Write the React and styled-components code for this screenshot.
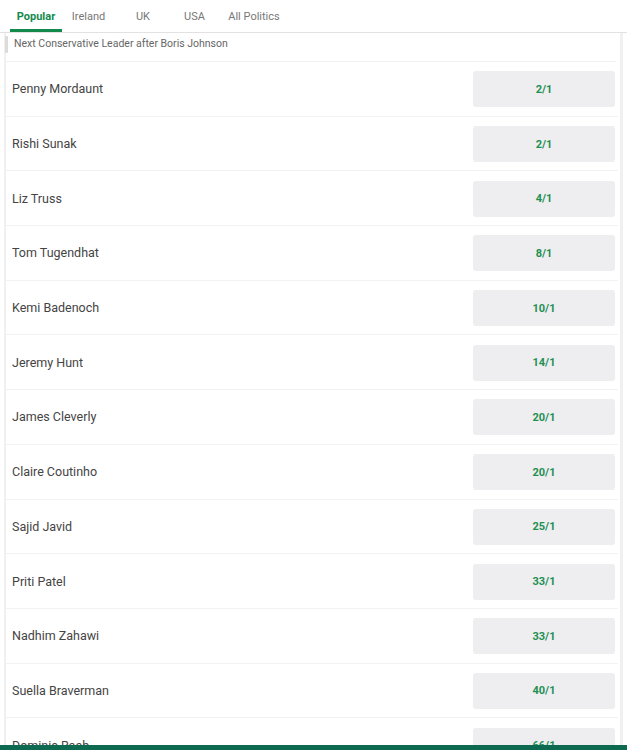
import React from 'react';
import styled, { createGlobalStyle } from 'styled-components';

const GlobalStyle = createGlobalStyle`
  body {
    margin: 0;
    background: #fff;
    font-family: Roboto, "Liberation Sans", sans-serif;
  }
`;

const Page = styled.div`
  width: 627px;
  height: 750px;
  overflow: hidden;
  background: #fff;
`;

const Tabs = styled.div`
  display: flex;
  height: 32px;
  border-bottom: 1px solid #e2e2e2;
  padding-left: 10px;
`;

const Tab = styled.div`
  display: flex;
  align-items: center;
  justify-content: center;
  box-sizing: border-box;
  width: ${props => props.w}px;
  font-size: 11px;
  color: ${props => (props.active ? '#138a4c' : '#777')};
  font-weight: ${props => (props.active ? 700 : 400)};
  border-bottom: 3px solid ${props => (props.active ? '#138a4c' : 'transparent')};
  padding-top: 3px;
`;

const Market = styled.div`
  margin: 0 4px 0 4px;
  border-left: 2px solid #f0f0f0;
  border-right: 3px solid #f0f0f0;
`;

const MarketHeader = styled.div`
  display: flex;
  align-items: center;
  box-sizing: border-box;
  height: 29px;
  padding-bottom: 7px;
  border-bottom: 1px solid #f2f2f2;
  font-size: 10.5px;
  color: #666;
  gap: 6px;
  margin-right: 4px;
`;

const HeaderMark = styled.span`
  width: 3px;
  height: 17px;
  background: #dcdcdc;
  border-radius: 1px;
  align-self: flex-start;
  margin-top: 3px;
  margin-left: -1px;
`;

const Row = styled.div`
  display: flex;
  align-items: center;
  justify-content: space-between;
  height: 53.7px;
  border-bottom: 1px solid #f2f2f2;
  padding: 0 3px 0 6px;
  margin-right: 2px;
`;

const Name = styled.span`
  font-size: 12.5px;
  color: #444;
`;

const Odds = styled.button`
  width: 142px;
  height: 36px;
  border: none;
  border-radius: 3px;
  background: #eeeef1;
  color: #1f8f52;
  font-family: inherit;
  font-size: 11px;
  font-weight: 700;
  margin-top: 1px;
`;

const BottomBar = styled.div`
  position: fixed;
  left: 0;
  right: 0;
  bottom: 0;
  height: 5px;
  background: #0d6a50;
`;

const tabs = [
  { label: 'Popular', w: 52, active: true },
  { label: 'Ireland', w: 53 },
  { label: 'UK', w: 56 },
  { label: 'USA', w: 47 },
  { label: 'All Politics', w: 72 },
];

const runners = [
  ['Penny Mordaunt', '2/1'],
  ['Rishi Sunak', '2/1'],
  ['Liz Truss', '4/1'],
  ['Tom Tugendhat', '8/1'],
  ['Kemi Badenoch', '10/1'],
  ['Jeremy Hunt', '14/1'],
  ['James Cleverly', '20/1'],
  ['Claire Coutinho', '20/1'],
  ['Sajid Javid', '25/1'],
  ['Priti Patel', '33/1'],
  ['Nadhim Zahawi', '33/1'],
  ['Suella Braverman', '40/1'],
  ['Dominic Raab', '66/1'],
];

export default function App() {
  return (
    <Page>
      <GlobalStyle />
      <Tabs>
        {tabs.map(t => (
          <Tab key={t.label} w={t.w} active={t.active}>{t.label}</Tab>
        ))}
      </Tabs>
      <Market>
        <MarketHeader>
          <HeaderMark />
          Next Conservative Leader after Boris Johnson
        </MarketHeader>
        {runners.map(([name, price]) => (
          <Row key={name}>
            <Name>{name}</Name>
            <Odds>{price}</Odds>
          </Row>
        ))}
      </Market>
      <BottomBar />
    </Page>
  );
}
